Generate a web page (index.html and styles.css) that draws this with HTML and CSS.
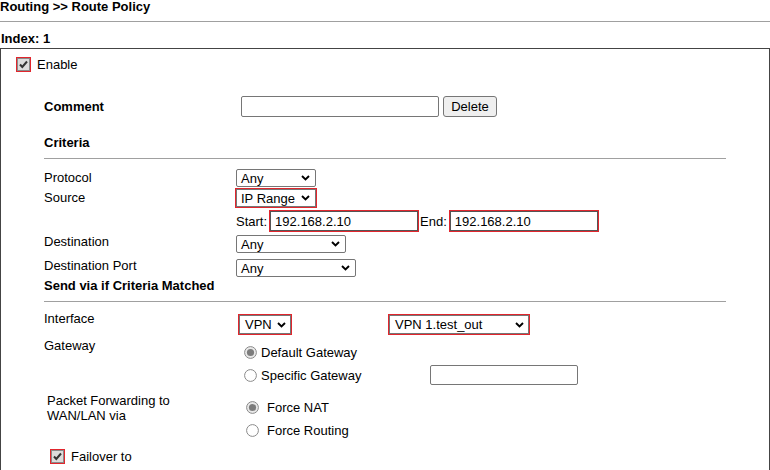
FILE: index.html
```html
<!DOCTYPE html>
<html>
<head>
<meta charset="utf-8">
<link rel="stylesheet" href="styles.css">
</head>
<body>
<div class="title">Routing &gt;&gt; Route Policy</div>
<div class="rule"></div>
<div class="index">Index: 1</div>
<div class="box">
  <div class="check-row enable">
    <span class="chk hl"><svg viewBox="0 0 11 11"><polyline points="2,5.5 4.3,8 9,2.5" fill="none" stroke="#333" stroke-width="2"/></svg></span>
    <span class="ctext">Enable</span>
  </div>
  <div class="form">
    <div class="row comment">
      <span class="lbl b w197">Comment</span>
      <input class="txt w198" type="text" value="">
      <button class="btn" type="button">Delete</button>
    </div>
    <div class="section">Criteria</div>
    <div class="hr"></div>

    <div class="row r-proto">
      <span class="lbl">Protocol</span>
      <div class="sel w80"><span>Any</span><svg viewBox="0 0 9 6"><polyline points="1,1 4.5,4.5 8,1" fill="none" stroke="#000" stroke-width="1.9"/></svg></div>
    </div>
    <div class="row r-src">
      <span class="lbl">Source</span>
      <div class="sel w80 hl"><span>IP Range</span><svg viewBox="0 0 9 6"><polyline points="1,1 4.5,4.5 8,1" fill="none" stroke="#000" stroke-width="1.9"/></svg></div>
    </div>
    <div class="row r-range">
      <span class="lbl"></span>
      <span>Start:</span>
      <input class="txt ip hl" type="text" value="192.168.2.10">
      <span>End:</span>
      <input class="txt ip hl" type="text" value="192.168.2.10">
    </div>
    <div class="row r-dst top">
      <span class="lbl">Destination</span>
      <div class="sel w110"><span>Any</span><svg viewBox="0 0 9 6"><polyline points="1,1 4.5,4.5 8,1" fill="none" stroke="#000" stroke-width="1.9"/></svg></div>
    </div>
    <div class="row r-port top">
      <span class="lbl">Destination Port</span>
      <div class="sel w120"><span>Any</span><svg viewBox="0 0 9 6"><polyline points="1,1 4.5,4.5 8,1" fill="none" stroke="#000" stroke-width="1.9"/></svg></div>
    </div>
    <div class="section send">Send via if Criteria Matched</div>
    <div class="hr"></div>

    <div class="row r-if top">
      <span class="lbl lift">Interface</span>
      <div class="sel tall w52 hl vpn"><span>VPN</span><svg viewBox="0 0 9 6"><polyline points="1,1 4.5,4.5 8,1" fill="none" stroke="#000" stroke-width="1.9"/></svg></div>
      <div class="sel tall w140 hl vpn1"><span>VPN 1.test_out</span><svg viewBox="0 0 9 6"><polyline points="1,1 4.5,4.5 8,1" fill="none" stroke="#000" stroke-width="1.9"/></svg></div>
    </div>

    <div class="block gw">
      <span class="blbl w200">Gateway</span>
      <div class="opts">
        <div class="opt o1">
          <svg class="radio" viewBox="0 0 13 13"><circle cx="6.5" cy="6.5" r="5.9" fill="#e9e9e9" stroke="#8a8a8a"/><circle cx="6.5" cy="6.5" r="3.6" fill="#7c7c7c"/></svg>
          <span>Default Gateway</span>
        </div>
        <div class="opt o2">
          <span class="optw">
            <svg class="radio" viewBox="0 0 13 13"><circle cx="6.5" cy="6.5" r="5.9" fill="#fff" stroke="#8a8a8a"/></svg>
            <span>Specific Gateway</span>
          </span>
          <input class="txt w148" type="text" value="">
        </div>
      </div>
    </div>

    <div class="block pf">
      <span class="blbl w202">Packet Forwarding to<br>WAN/LAN via</span>
      <div class="opts">
        <div class="opt p1">
          <svg class="radio wide" viewBox="0 0 13 13"><circle cx="6.5" cy="6.5" r="5.9" fill="#e9e9e9" stroke="#8a8a8a"/><circle cx="6.5" cy="6.5" r="3.6" fill="#7c7c7c"/></svg>
          <span>Force NAT</span>
        </div>
        <div class="opt p2">
          <svg class="radio wide" viewBox="0 0 13 13"><circle cx="6.5" cy="6.5" r="5.9" fill="#fff" stroke="#8a8a8a"/></svg>
          <span>Force Routing</span>
        </div>
      </div>
    </div>

    <div class="check-row failover">
      <span class="chk hl"><svg viewBox="0 0 11 11"><polyline points="2,5.5 4.3,8 9,2.5" fill="none" stroke="#333" stroke-width="2"/></svg></span>
      <span class="ctext">Failover to</span>
    </div>
  </div>
</div>
</body>
</html>
```
FILE: styles.css
```css
* { box-sizing: border-box; }
body {
  margin: 0;
  font-family: "Liberation Sans", Arial, sans-serif;
  font-size: 13px;
  color: #000;
  background: #fff;
  width: 770px;
  height: 470px;
  overflow: hidden;
}
.title { font-weight: bold; line-height: 14px; height: 14px; }
.rule { margin-top: 7px; border-top: 1px solid #a0a0a0; }
.index { font-weight: bold; line-height: 15px; height: 15px; margin-top: 9px; padding-left: 1px; }
.box {
  margin-top: 2px;
  width: 770px;
  height: 422px;
  border: 1px solid #444;
  border-bottom: none;
}
.check-row { display: flex; align-items: center; height: 16px; }
.enable { margin-top: 7px; padding-left: 16px; }
.failover { margin-top: 11px; padding-left: 7px; }
.ctext { margin-left: 7px; padding-top: 1px; }
.chk {
  width: 13px; height: 13px;
  border: 1px solid #8a8a8a;
  background: #dcdcdc;
  display: flex;
}
.chk svg { width: 11px; height: 11px; }
.hl { outline: 1px solid #e1262d; border-radius: 0 !important; }

.form { padding-left: 43px; }
.row { display: flex; align-items: center; }
.row.top { align-items: flex-start; }
.lbl { width: 192px; flex: none; line-height: 14px; }
.lift { margin-top: -3px; }
.b { font-weight: bold; }
.w197 { width: 197px; }

.comment { margin-top: 24px; height: 21px; }
.txt {
  font: inherit;
  font-size: 13px;
  color: #000;
  border: 1px solid #767676;
  border-radius: 2px;
  padding: 0 4px;
  background: #fff;
  margin: 0;
}
.comment .txt { height: 21px; }
.w198 { width: 198px; }
.btn {
  font: inherit;
  font-size: 13px;
  height: 21px;
  width: 54px;
  margin: 0 0 0 4px;
  padding: 0;
  border: 1px solid #767676;
  border-radius: 3px;
  background: #efefef;
  color: #000;
}
.section { font-weight: bold; line-height: 16px; height: 16px; margin-top: 18px; }
.section.send { margin-top: 1px; }
.hr { margin-top: 7px; width: 682px; border-top: 1px solid #a0a0a0; }

.sel {
  display: flex;
  align-items: center;
  justify-content: space-between;
  height: 18px;
  border: 1px solid #767676;
  border-radius: 2px;
  padding: 0 5px 0 4px;
  background: #fff;
  white-space: nowrap;
  flex: none;
}
.sel svg { width: 9px; height: 6px; flex: none; }
.sel.tall { height: 19px; padding-left: 5px; padding-right: 4px; }
.w80 { width: 80px; }
.w110 { width: 110px; }
.w120 { width: 120px; }
.w52 { width: 52px; }
.w140 { width: 140px; }
.w148 { width: 148px; }

.r-proto { margin-top: 10px; height: 18px; }
.r-src { margin-top: 2px; height: 18px; }
.r-range { margin-top: 4px; height: 20px; }
.ip { width: 148px; height: 20px; margin: 0 2px 0 3px; padding-left: 4px; border-color: #555; }
.r-dst { margin-top: 4px; height: 18px; }
.r-port { margin-top: 6px; height: 18px; }
.r-if { margin-top: 13px; height: 19px; }
.vpn { margin-left: 3px; }
.vpn1 { margin-left: 98px; }

.block { display: flex; align-items: flex-start; }
.blbl { flex: none; }
.w200 { width: 200px; }
.w202 { width: 202px; padding-left: 3px; line-height: 15px; }
.gw { margin-top: 5px; }
.gw .blbl { line-height: 14px; }
.gw .opts { padding-top: 6px; }
.pf { margin-top: 8px; }
.pf .opts { padding-top: 7px; }
.opts { display: flex; flex-direction: column; }
.opt { display: flex; align-items: center; }
.o1 { height: 15px; }
.o2 { height: 20px; margin-top: 5px; }
.optw { display: flex; align-items: center; width: 186px; }
.o2 .txt { height: 20px; }
.p1 { height: 14px; }
.p2 { height: 14px; margin-top: 9px; }
.radio { width: 13px; height: 13px; flex: none; margin-right: 4px; }
.radio.wide { margin-right: 8px; }
```
